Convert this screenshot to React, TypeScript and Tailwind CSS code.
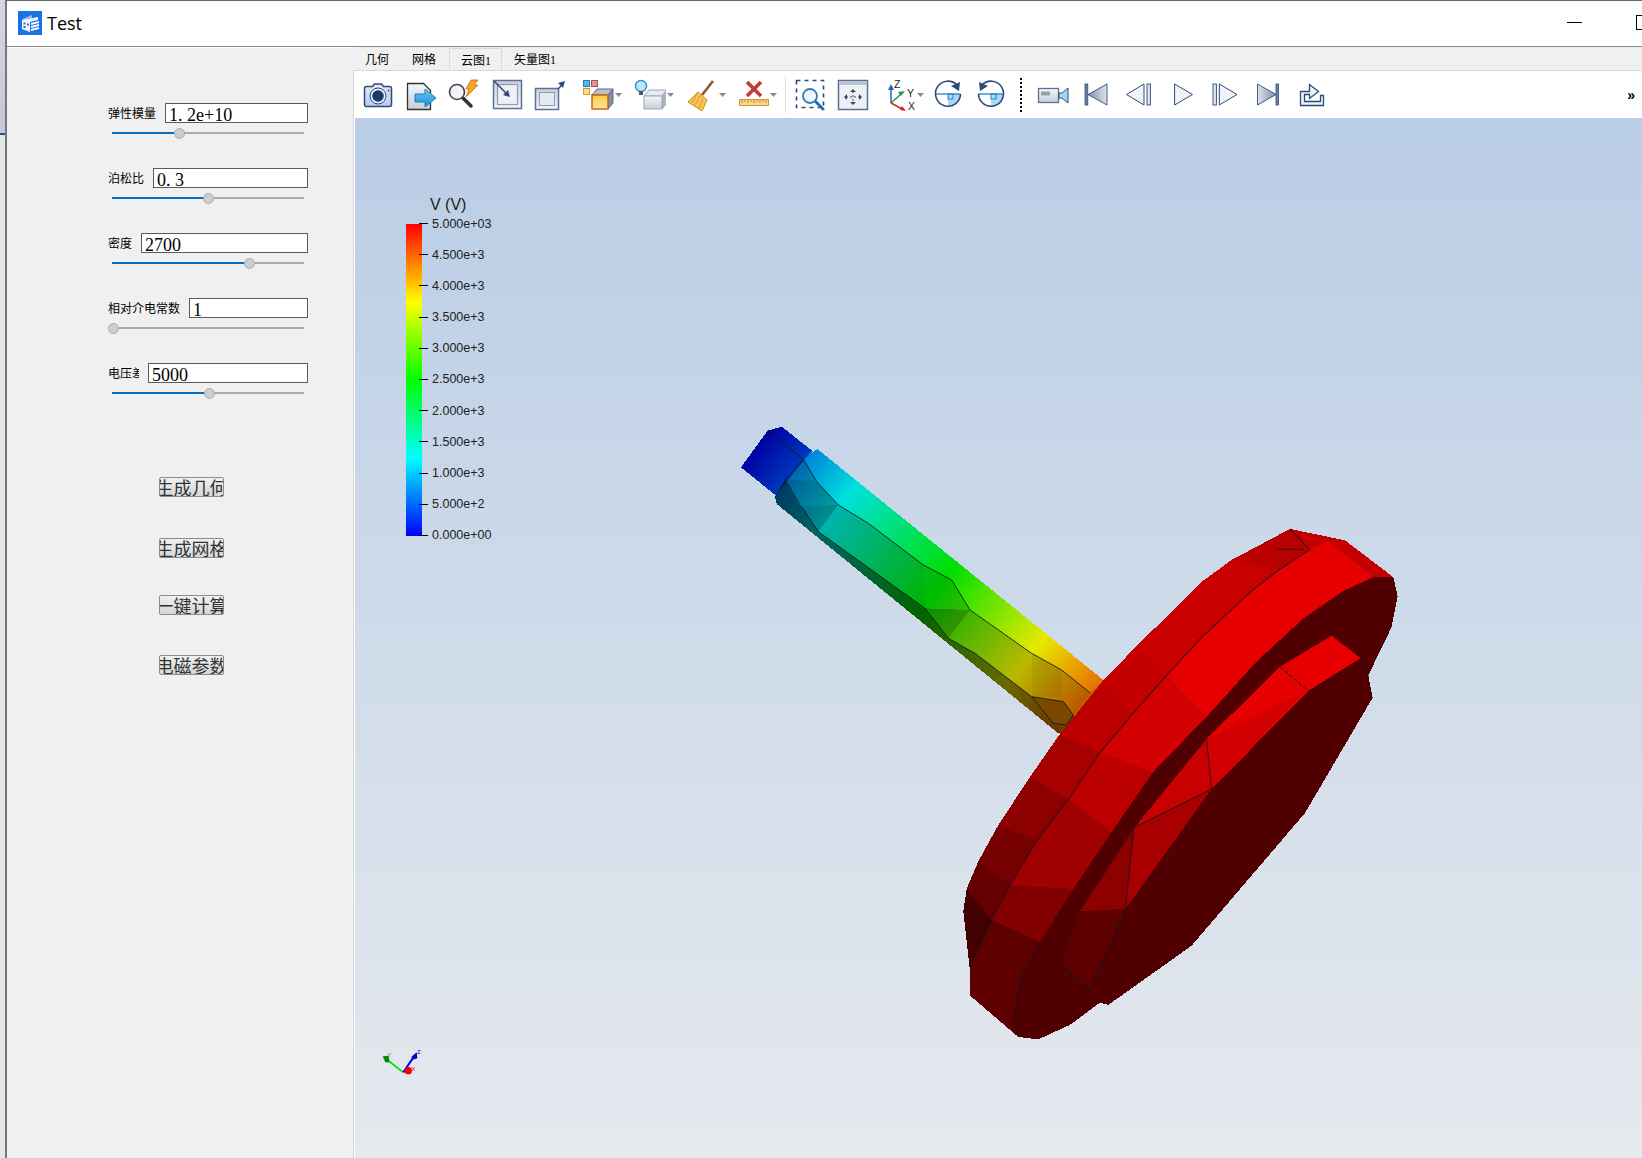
import React from "react";

const CJK = "font-['Noto_Sans_CJK_SC',sans-serif]";
const NAVY = "#2e4a78";

function Icon({ w = 32, children }: { w?: number; children: React.ReactNode }) {
  return (
    <svg width={w} height={32} viewBox={`0 0 ${w} 32`} className="block shrink-0">
      {children}
    </svg>
  );
}

function Caret({ className = "" }: { className?: string }) {
  return (
    <svg width={7} height={4} viewBox="0 0 7 4" className={`block shrink-0 ${className}`}>
      <path d="M0 0h7L3.5 4z" fill="#8a8a8a" />
    </svg>
  );
}

function Slider({ value, filled = true }: { value: number; filled?: boolean }) {
  return (
    <div className="relative ml-[4px] flex h-[20px] w-[192px] items-center">
      <div className="h-[2px] w-full bg-[#ababab]" />
      {filled && (
        <div className="absolute left-0 top-[9px] h-[2px] bg-[#0a6cbd]" style={{ width: value }} />
      )}
      <div
        className="absolute top-[5px] h-[11px] w-[11px] rounded-full border border-[#adadad] bg-[#cdcdcd]"
        style={{ left: value - 5 }}
      />
    </div>
  );
}

function Field({
  label,
  value,
  thumb,
  labelClass = "",
  filled = true,
}: {
  label: string;
  value: string;
  thumb: number;
  labelClass?: string;
  filled?: boolean;
}) {
  return (
    <div className="mb-[25px] w-[200px]">
      <div className="flex h-[20px] items-center gap-[9px]">
        <div className={`shrink-0 whitespace-nowrap text-[12px] leading-[20px] text-black ${CJK} ${labelClass}`}>
          {label}
        </div>
        <div className="flex h-[20px] min-w-0 flex-1 items-center border border-[#5a5a5a] bg-white pl-[3px] pt-[3px] font-['Liberation_Serif',serif] text-[18px] leading-[18px] text-black">
          {value}
        </div>
      </div>
      <Slider value={thumb} filled={filled} />
    </div>
  );
}

function Btn({ label, className }: { label: string; className: string }) {
  return (
    <div
      className={`flex h-[20px] w-[65px] items-center justify-center overflow-hidden whitespace-nowrap rounded-[2px] border border-[#8c8c8c] bg-linear-to-b from-[#f0f0f0] to-[#d6d6d6] text-[18px] leading-[18px] text-[#333] ${CJK} ${className}`}
    >
      {label}
    </div>
  );
}

const defs = (
  <svg width={0} height={0} className="absolute">
    <defs>
      <linearGradient id="btn" x1="0" y1="0" x2="0" y2="1">
        <stop offset="0" stopColor="#f4f6f9" />
        <stop offset="1" stopColor="#c6ced9" />
      </linearGradient>
      <linearGradient id="box" x1="0" y1="0" x2="0" y2="1">
        <stop offset="0" stopColor="#c9d0da" />
        <stop offset="1" stopColor="#f3f4f7" />
      </linearGradient>
      <linearGradient id="cam" x1="0" y1="0" x2="0" y2="1">
        <stop offset="0" stopColor="#e4ecf7" />
        <stop offset="1" stopColor="#b9cce6" />
      </linearGradient>
      <linearGradient id="blueArrow" x1="0" y1="0" x2="0" y2="1">
        <stop offset="0" stopColor="#6cc4f2" />
        <stop offset="1" stopColor="#1f8fd6" />
      </linearGradient>
      <linearGradient id="yel" x1="0" y1="0" x2="0" y2="1">
        <stop offset="0" stopColor="#ffc93e" />
        <stop offset="1" stopColor="#ffe9a3" />
      </linearGradient>
      <linearGradient id="tri" x1="1" y1="0" x2="0" y2="0">
        <stop offset="0" stopColor="#7f8ea6" />
        <stop offset="1" stopColor="#dfe4ec" />
      </linearGradient>
      <linearGradient id="tri2" x1="0" y1="0" x2="1" y2="0">
        <stop offset="0" stopColor="#7f8ea6" />
        <stop offset="1" stopColor="#dfe4ec" />
      </linearGradient>
    </defs>
  </svg>
);

function Toolbar() {
  return (
    <div className="flex h-[47px] shrink-0 items-center bg-white pl-[7px]">
      {defs}
      <Icon>
        <path d="M2.5 9.5q0-2 2-2h6l2-2.5h7l2 2.5h6q2 0 2 2v16q0 2-2 2h-23q-2 0-2-2z" fill="url(#cam)" stroke="#2c4a7c" strokeWidth="1.5" />
        <circle cx="16" cy="17" r="8" fill="#eef3fa" stroke="#2c4a7c" />
        <circle cx="16" cy="17" r="5.8" fill="#1d3a70" />
        <circle cx="26.5" cy="11.5" r="1" fill="#2c4a7c" />
      </Icon>
      <div className="ml-[11px]">
        <Icon>
          <path d="M2.5 4.5h16l7 7v19h-23z" fill="url(#btn)" stroke="#333" strokeWidth="1.3" />
          <path d="M10 15h10v-5l11 9-11 9v-5h-10z" fill="url(#blueArrow)" stroke="#1b7fc4" />
        </Icon>
      </div>
      <div className="ml-[10px]">
        <Icon>
          <path d="M16 19l8 8" stroke="#333" strokeWidth="3.5" strokeLinecap="round" />
          <circle cx="10" cy="13" r="7.5" fill="#f1f4f8" stroke="#444" strokeWidth="1.6" />
          <path d="M24 1h7l-4 5h4L19 18l3-8h-3z" fill="#f6a722" stroke="#c96d10" strokeWidth=".8" />
        </Icon>
      </div>
      <div className="ml-[12px]">
        <Icon>
          <rect x="2.5" y="1.5" width="28" height="28" fill="url(#box)" stroke="#5a7299" strokeWidth="1.5" />
          <rect x="6.5" y="5.5" width="20" height="20" fill="#eef0f4" stroke="#8d9ab0" strokeWidth="1.2" />
          <path d="M3 2l13 13" stroke={NAVY} strokeWidth="1.5" />
          <path d="M19 18l-7-2 5-5z" fill={NAVY} />
        </Icon>
      </div>
      <div className="ml-[11px]">
        <Icon>
          <rect x="1.5" y="9.5" width="23" height="21" fill="url(#box)" stroke="#5a7299" strokeWidth="1.5" />
          <rect x="5.5" y="13.5" width="15" height="13" fill="#e7eaf0" stroke="#8d9ab0" />
          <path d="M24 10l5-5" stroke={NAVY} strokeWidth="1.5" />
          <path d="M31 2l-2 7-5-5z" fill={NAVY} />
        </Icon>
      </div>
      <div className="ml-[16px]">
        <Icon>
          <rect x="1.5" y="1.5" width="6" height="6" fill="#58b4ec" stroke="#2f78b8" />
          <rect x="9.5" y="1.5" width="6" height="6" fill="#e88f96" stroke="#a8505a" />
          <rect x="1.5" y="9.5" width="6" height="6" fill="#ffd98a" stroke="#d19a3a" />
          <path d="M10 16l5-6h16l-5 6z" fill="#b8c0cc" stroke="#5a6b85" />
          <path d="M26 16l5-6v14l-5 6z" fill="#7e8ea8" stroke="#5a6b85" />
          <rect x="10" y="16" width="16" height="14" fill="url(#yel)" stroke="#c4651a" strokeWidth="1.5" />
        </Icon>
      </div>
      <Caret className="ml-[1px]" />
      <div className="ml-[12px]">
        <Icon>
          <circle cx="7" cy="7" r="5.5" fill="#bfe3fb" stroke="#2f8fd6" strokeWidth="1.4" />
          <rect x="5" y="12" width="4" height="4" fill="#555" />
          <path d="M10 17l5-6h18l-5 6z" fill="#e8ebef" stroke="#9aa6b8" />
          <path d="M28 17l5-6v13l-5 6z" fill="#a9b4c4" stroke="#9aa6b8" />
          <rect x="10" y="17" width="18" height="13" fill="url(#btn)" stroke="#9aa6b8" />
        </Icon>
      </div>
      <Caret className="ml-[1px]" />
      <div className="ml-[13px]">
        <Icon>
          <path d="M26 2L15 16" stroke="#8a5a2a" strokeWidth="2.6" />
          <path d="M11 13l9 8-5 11-14-9z" fill="#f8c554" stroke="#cf8c22" strokeWidth="1" />
          <path d="M13 17l-5 9M16 20l-4 9M10 15l-5 9" stroke="#cf8c22" strokeWidth=".8" />
        </Icon>
      </div>
      <Caret />
      <div className="ml-[11px]">
        <Icon>
          <path d="M10 3l14 14M24 3L10 17" stroke="#c23b3b" strokeWidth="3.6" />
          <rect x="2.5" y="20.5" width="29" height="6" fill="#f8d78e" stroke="#cf9a3a" />
          <path d="M5 21v3M8 21v2M11 21v3M14 21v2M17 21v3M20 21v2M23 21v3M26 21v2M29 21v3" stroke="#a87a2a" strokeWidth=".8" />
        </Icon>
      </div>
      <Caret className="ml-[1px]" />
      <div className="ml-[8px] h-[36px] w-[1px] bg-[#dcdcdc]" />
      <div className="ml-[8px]">
        <Icon>
          <rect x="2.5" y="1.5" width="27" height="27" fill="none" stroke={NAVY} strokeWidth="1.6" strokeDasharray="4 4" />
          <path d="M21 22l8 8" stroke="#1f6fb0" strokeWidth="3" strokeLinecap="round" />
          <circle cx="16" cy="17" r="7" fill="#f0f6fc" stroke="#2f7fc0" strokeWidth="1.8" />
        </Icon>
      </div>
      <div className="ml-[11px]">
        <Icon>
          <rect x="1.5" y="1.5" width="29" height="29" fill="#eef0f4" stroke="#5a7299" strokeWidth="1.5" />
          <rect x="2" y="2" width="28" height="4" fill="#b9c3d2" />
          <path d="M16 10l3 3h-6zM16 26l3-3h-6zM7 18l3-3v6zM25 18l-3-3v6z" fill={NAVY} />
          <path d="M16 12v12M9 18h14" stroke={NAVY} strokeDasharray="2 2" />
        </Icon>
      </div>
      <div className="ml-[18px]">
        <Icon w={30}>
          <path d="M4 24V9" stroke="#2a62b8" strokeWidth="1.5" />
          <path d="M4 5l-3 6h6z" fill="#2a62b8" />
          <path d="M4 24l10-9" stroke="#1c9a4c" strokeWidth="1.5" />
          <path d="M18 12l-7 1 3 4z" fill="#1c9a4c" />
          <path d="M4 24l11 6" stroke="#e02020" strokeWidth="1.5" />
          <path d="M19 32l-6-1 2-4z" fill="#e02020" />
          <text x="7" y="9" fontSize="10.5" fontFamily="Liberation Sans, sans-serif" fill="#222">Z</text>
          <text x="20" y="18" fontSize="10.5" fontFamily="Liberation Sans, sans-serif" fill="#222">Y</text>
          <text x="21" y="31" fontSize="10.5" fontFamily="Liberation Sans, sans-serif" fill="#222">X</text>
        </Icon>
      </div>
      <Caret />
      <div className="ml-[8px]">
        <Icon>
          <path d="M16 15h12.5a12.5 12.5 0 0 1-12.5 12.5z" fill="#a9d9f6" />
          <rect x="16" y="15" width="5" height="5" fill="none" stroke="#2a7fc0" />
          <path d="M3.5 15h25" stroke="#2a7fc0" strokeWidth="1.3" />
          <path d="M25 6a12.5 12.5 0 1 0 3.5 9" fill="none" stroke={NAVY} strokeWidth="1.6" />
          <path d="M28 3l-1 9-8-5z" fill={NAVY} />
        </Icon>
      </div>
      <div className="ml-[11px]">
        <Icon>
          <path d="M16 15h12.5a12.5 12.5 0 0 1-12.5 12.5z" fill="#a9d9f6" />
          <rect x="16" y="15" width="5" height="5" fill="none" stroke="#2a7fc0" />
          <path d="M3.5 15h25" stroke="#2a7fc0" strokeWidth="1.3" />
          <path d="M7 6a12.5 12.5 0 1 1-3.5 9" fill="none" stroke={NAVY} strokeWidth="1.6" />
          <path d="M4 3l1 9 8-5z" fill={NAVY} />
        </Icon>
      </div>
      <div className="ml-[13px] h-[34px] w-[2px] border-l-2 border-dotted border-black" />
      <div className="ml-[15px]">
        <Icon>
          <rect x="1.5" y="9.5" width="20" height="14" fill="url(#btn)" stroke="#5a7299" strokeWidth="1.3" />
          <rect x="4" y="12.5" width="9" height="4" fill="#9aa0a8" />
          <path d="M22 14h3l6-5v15l-6-5h-3z" fill="#a9d4f2" stroke={NAVY} />
        </Icon>
      </div>
      <div className="ml-[11px]">
        <Icon>
          <rect x="5" y="5" width="2.8" height="21" fill="#6f83a3" stroke={NAVY} strokeWidth=".8" />
          <path d="M27 5L8 15.5 27 26z" fill="url(#tri2)" stroke={NAVY} strokeWidth=".9" />
        </Icon>
      </div>
      <div className="ml-[11px]">
        <Icon>
          <path d="M21 5L3.5 15.5 21 26z" fill="#f0f3f7" stroke={NAVY} strokeWidth="1" />
          <rect x="24" y="5" width="3.4" height="21" fill="#dfe5ee" stroke={NAVY} strokeWidth=".9" />
        </Icon>
      </div>
      <div className="ml-[13px]">
        <Icon>
          <path d="M6.6 5L24.5 15.5 6.6 26z" fill="#f0f3f7" stroke={NAVY} strokeWidth="1" />
        </Icon>
      </div>
      <div className="ml-[9px]">
        <Icon>
          <rect x="4" y="5" width="3.4" height="21" fill="#dfe5ee" stroke={NAVY} strokeWidth=".9" />
          <path d="M10.3 5L28 15.5 10.3 26z" fill="#f0f3f7" stroke={NAVY} strokeWidth="1" />
        </Icon>
      </div>
      <div className="ml-[11px]">
        <Icon>
          <path d="M5.5 5L24 15.5 5.5 26z" fill="url(#tri)" stroke={NAVY} strokeWidth=".9" />
          <rect x="24" y="5" width="2.4" height="21" fill="#6f83a3" stroke={NAVY} strokeWidth=".8" />
        </Icon>
      </div>
      <div className="ml-[12px]">
        <Icon>
          <path d="M4.5 12.5h9v-7l9 7-9 7v-4h-5v7h16v-6h3v10h-23z" fill="#eef3f9" stroke={NAVY} strokeWidth="1.3" />
        </Icon>
      </div>
      <div className="ml-auto mr-[7px] font-['Liberation_Sans',sans-serif] text-[14px] font-bold leading-[14px] text-black">»</div>
    </div>
  );
}

function Mesh() {
  return (
    <svg
      className="absolute left-0 top-0"
      width={1287}
      height={1040}
      viewBox="355 118 1287 1040"
      shapeRendering="crispEdges"
    >
      <defs>
        <linearGradient id="bar" gradientUnits="userSpaceOnUse" x1="63" y1="50" x2="1150" y2="930">
          <stop offset="0" stopColor="#0000a0" />
          <stop offset="0.05" stopColor="#0000a0" />
          <stop offset="0.148" stopColor="#0036bc" />
          <stop offset="0.152" stopColor="#0084da" />
          <stop offset="0.27" stopColor="#00e0dc" />
          <stop offset="0.546" stopColor="#00e000" />
          <stop offset="0.791" stopColor="#e8e800" />
          <stop offset="0.945" stopColor="#e87000" />
          <stop offset="1" stopColor="#d85000" />
        </linearGradient>
      </defs>
      {/* shaft, coordinates in a 3x space */}
      <g transform="translate(720 410) scale(0.3333)">
        <polygon points="1112,850 1150,810 1200,860 1100,960 1060,915" fill="#c85c00" />
        <polygon points="1000,940 1040,945 1060,915 1100,960 1060,1010 1030,972" fill="#6a4000" />
        <polygon points="63,172 143,62 250,148 168,257" fill="url(#bar)" />
        <polygon points="143,62 185,50 280,125 250,148" fill="url(#bar)" />
        <polygon points="250,148 292,117 1150,810 1112,850 1025,780 935,730 750,600 695,510 610,465 445,340 355,285 290,215" fill="url(#bar)" />
        <polygon points="250,148 290,215 355,285 445,340 610,465 695,510 750,600 935,730 1025,780 1112,850 1060,915 1030,875 935,860 765,730 685,685 615,595 295,365 245,290 198,208" fill="url(#bar)" />
        <polygon points="250,148 290,215 355,285 445,340 610,465 695,510 750,600 935,730 1025,780 1112,850 1060,915 1030,875 935,860 765,730 685,685 615,595 295,365 245,290 198,208" fill="#000" opacity="0.2" />
        <polygon points="198,208 290,215 355,285 245,290" fill="#000" opacity="0.1" />
        <polygon points="245,290 355,285 295,365" fill="#000" opacity="0.2" />
        <polygon points="610,465 695,510 750,600 615,595" fill="#00ff00" opacity="0.12" />
        <polygon points="615,595 750,600 685,685" fill="#000" opacity="0.18" />
        <polygon points="935,730 1025,780 1025,860 935,860" fill="#000" opacity="0.05" />
        <polygon points="165,262 198,208 245,290 295,365 615,595 685,685 765,730 935,860 1000,940 1030,972 1015,970 170,282" fill="url(#bar)" />
        <polygon points="165,262 198,208 245,290 295,365 615,595 685,685 765,730 935,860 1000,940 1030,972 1015,970 170,282" fill="#000" opacity="0.55" />
        <polygon points="935,860 1030,875 1060,915 1040,945 1000,940" fill="#7c4800" />
        <g fill="none" stroke="#0a1a20" strokeWidth="3" shapeRendering="auto" opacity="0.85">
          <polyline points="143,62 250,148 290,215 355,285 445,340 610,465 695,510 750,600 935,730 1025,780 1112,850" />
          <polyline points="250,148 198,208 165,262" />
          <polyline points="245,290 295,365 615,595 685,685 765,730 935,860" />
          <polyline points="935,860 1030,875 1060,915 1040,945 1000,940 935,860" />
        </g>
      </g>
      {/* disc */}
      <g transform="translate(950 510) scale(0.3333 0.3444)">
        <polygon points="1020,55 1185,88 1330,195 1343,250 1325,340 1255,480 1268,545 1065,880 725,1265 475,1437 450,1430 360,1495 265,1537 205,1530 60,1410 60,1320 40,1165 50,1100 85,1020 145,915 240,775 330,650 460,495 560,395 760,205 845,145" fill="#500000" />
        {/* outer band */}
        <polygon points="1020,55 845,145 985,175 1080,115" fill="#b80000" />
        <polygon points="845,145 760,205 560,395 650,480 750,375 905,235 985,175" fill="#c80000" />
        <polygon points="560,395 460,495 545,595 650,480" fill="#c40000" />
        <polygon points="460,495 330,650 450,705 545,595" fill="#bc0000" />
        <polygon points="330,650 240,775 355,840 450,705" fill="#a60000" />
        <polygon points="240,775 145,915 260,960 355,840" fill="#8c0000" />
        <polygon points="145,915 85,1020 180,1090 260,960" fill="#760000" />
        <polygon points="85,1020 50,1100 125,1190 180,1090" fill="#660000" />
        <polygon points="50,1100 40,1165 60,1340 65,1320 125,1190" fill="#420000" />
        {/* inner band */}
        <polygon points="1020,55 1185,88 1330,195 1270,195 1135,90 1080,115" fill="#c40000" />
        <polygon points="1080,115 1135,90 1270,195 1180,235 1060,315 920,440 770,600 650,480 750,375 905,235 985,175" fill="#e60000" />
        <polygon points="650,480 770,600 610,760 450,705 545,595" fill="#d20000" />
        <polygon points="450,705 610,760 485,935 355,840" fill="#bc0000" />
        <polygon points="355,840 485,935 370,1100 180,1090 260,960" fill="#a00000" />
        <polygon points="180,1090 370,1100 270,1255 125,1190" fill="#820000" />
        <polygon points="125,1190 270,1255 215,1350 190,1480 205,1530 60,1410 65,1320" fill="#5f0000" />
        {/* opening */}
        <polygon points="1145,365 1232,430 1075,525 785,810 770,665 990,455" fill="#e60000" />
        <polygon points="770,665 1060,530 785,810" fill="#d20000" />
        <polygon points="770,665 785,810 555,920" fill="#c80000" />
        <polygon points="785,810 527,1158 550,925" fill="#a80000" />
        <polygon points="555,920 527,1158 390,1165" fill="#8c0000" />
        <polygon points="390,1165 527,1158 420,1395 335,1320" fill="#5f0000" />
        <polygon points="1232,430 1255,480 1268,545 1065,880 725,1265 475,1437 420,1395 527,1158 785,810 1075,525" fill="#500000" />
        <g fill="none" stroke="#0a1a20" strokeWidth="3" shapeRendering="auto" opacity="0.8">
          <polyline points="1080,115 985,175 905,235 750,375 650,480 545,595 450,705 355,840 260,960 180,1090 125,1190 65,1320" />
          <line x1="1020" y1="55" x2="1080" y2="115" />
          <line x1="978" y1="114" x2="1060" y2="114" />
          <line x1="990" y1="455" x2="1075" y2="525" strokeDasharray="12 6" />
          <polyline points="770,665 785,810 555,920" />
          <polyline points="550,925 527,1158 420,1395 335,1320" />
          <line x1="1232" y1="430" x2="1255" y2="480" />
          <polyline points="270,1255 215,1350 190,1480 205,1530" />
        </g>
      </g>
      {/* orientation marker */}
      <g transform="translate(370 1035) scale(0.3333)" shapeRendering="auto">
        <line x1="100" y1="112" x2="48" y2="72" stroke="#00e000" strokeWidth="5" />
        <polygon points="38,64 56,62 58,82 46,82" fill="#008a00" />
        <line x1="100" y1="112" x2="135" y2="60" stroke="#0000f0" strokeWidth="6" />
        <polygon points="124,66 140,52 142,70 128,74" fill="#0000c0" />
        <circle cx="115" cy="107" r="11" fill="#f00000" />
        <text x="124" y="107" fontSize="18" fill="#e00000" fontFamily="Liberation Sans, sans-serif">X</text>
        <text x="52" y="66" fontSize="18" fill="#00c000" fontFamily="Liberation Sans, sans-serif">Y</text>
        <text x="141" y="58" fontSize="18" fill="#0000f0" fontFamily="Liberation Sans, sans-serif">Z</text>
      </g>
    </svg>
  );
}

const ticks = ["5.000e+03", "4.500e+3", "4.000e+3", "3.500e+3", "3.000e+3", "2.500e+3", "2.000e+3", "1.500e+3", "1.000e+3", "5.000e+2", "0.000e+00"];

function Legend() {
  return (
    <div className="absolute left-[51px] top-[74px] font-['Liberation_Sans',sans-serif] text-[#222]">
      <div className="ml-[24px] h-[32px] pt-[1px] text-[16px] leading-[24px]">V (V)</div>
      <div className="relative h-[312px] w-[16px] bg-[linear-gradient(to_bottom,#ff0000_0%,#ffff00_25%,#00ff00_50%,#00ffff_75%,#0000ff_100%)]">
        <div className="absolute left-[13px] top-[-1px] flex h-[313px] flex-col justify-between">
          {ticks.map((t) => (
            <div key={t} className="flex h-[1px] items-center whitespace-nowrap">
              <div className="h-[1px] w-[9px] bg-black" />
              <div className="ml-[4px] text-[12.5px] leading-[12px]">{t}</div>
            </div>
          ))}
        </div>
      </div>
    </div>
  );
}

export default function App() {
  return (
    <div className="flex h-[1158px] w-[1642px] overflow-hidden bg-white">
      <div className="flex w-[5px] shrink-0 flex-col">
        <div className="h-[133px] bg-linear-to-b from-[#d5d8de] to-[#c3c8d2]" />
        <div className="h-[2px] bg-[#0f5c94]" />
        <div className="flex-1 bg-[#e6e6e6]" />
      </div>
      <div className="flex min-w-0 flex-1 flex-col border-l-[2px] border-t border-[#74787c] border-t-[#6c6c6c]">
        <div className="flex h-[46px] shrink-0 items-center overflow-hidden border-b-[1px] border-[#8a8a8a] bg-white pb-[2px] pl-[11px]">
          <svg width={24} height={24} viewBox="0 0 24 24" className="block shrink-0">
            <rect width="24" height="24" fill="#1a73e6" />
            <path d="M4 8l10-4v3L7 9z" fill="#8fbdf5" />
            <path d="M4 9l16 -3v3L12 11v10L4 18z" fill="#fff" opacity=".95" />
            <path d="M13 12l8-2v2l-8 2zM13 15l8-2v2l-8 2zM13 18l8-2v2l-8 2z" fill="#fff" />
            <rect x="5.5" y="11.5" width="2" height="2" fill="#1a73e6" />
            <rect x="5.5" y="15" width="2" height="2" fill="#1a73e6" />
            <rect x="9" y="12.5" width="2" height="2" fill="#1a73e6" />
          </svg>
          <div className="ml-[5px] font-['Open_Sans',sans-serif] text-[18px] leading-[24px] text-black">Test</div>
          <div className="ml-auto h-[1px] w-[15px] shrink-0 bg-black" />
          <div className="ml-[54px] mr-[-9px] h-[15px] w-[15px] shrink-0 border border-black" />
        </div>
        <div className="flex min-h-0 flex-1">
          <div className="flex w-[346px] shrink-0 flex-col border-t border-white bg-[#f0f0f0] pl-[101px] pt-[55px]">
            <Field label="弹性模量" value="1. 2e+10" thumb={67} />
            <Field label="泊松比" value="0. 3" thumb={96} />
            <Field label="密度" value="2700" thumb={137} />
            <Field label="相对介电常数" value="1" thumb={1} filled={false} />
            <Field label="电压差" value="5000" thumb={97} labelClass="w-[31px] overflow-hidden" />
            <Btn label="生成几何" className="ml-[51px] mt-[49px]" />
            <Btn label="生成网格" className="ml-[51px] mt-[41px]" />
            <Btn label="一键计算" className="ml-[51px] mt-[37px]" />
            <Btn label="电磁参数" className="ml-[51px] mt-[40px]" />
          </div>
          <div className="flex min-w-0 flex-1 flex-col bg-[#f0f0f0]">
            <div className={`flex h-[23px] shrink-0 items-end text-[12px] leading-[22px] text-black ${CJK}`}>
              <div className="h-[22px] pl-[12px] pr-[12px]">几何</div>
              <div className="h-[22px] pr-[13px] pl-[11px]">网格</div>
              <div className="h-[22px] border-x border-t border-[#d9d9d9] pl-[11px] pr-[10px]">云图<span className="font-['Liberation_Serif',serif]">1</span></div>
              <div className="h-[22px] pl-[12px]">矢量图<span className="font-['Liberation_Serif',serif]">1</span></div>
            </div>
            <div className="flex min-h-0 flex-1 flex-col border-l border-t border-[#d9d9d9] bg-white pl-[1px]">
              <Toolbar />
              <div className="relative min-h-0 flex-1 overflow-hidden bg-linear-to-b from-[#b9cde5] to-[#e6e9ee]">
                <Mesh />
                <Legend />
              </div>
            </div>
          </div>
        </div>
      </div>
    </div>
  );
}
